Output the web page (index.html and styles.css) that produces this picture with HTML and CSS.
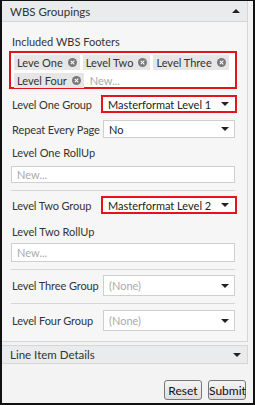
FILE: index.html
```html
<!DOCTYPE html>
<html lang="en">
<head>
    <meta charset="UTF-8">
    <title>WBS Groupings</title>
    <link rel="stylesheet" href="styles.css">
</head>
<body>
    <div class="frame">
        <div class="panel">
            <div class="panel-header">
                <span>WBS Groupings</span>
                <span class="caret up"></span>
            </div>
            <div class="panel-body">
                <div class="field-label">Included WBS Footers</div>
                <div class="tag-box highlight">
                    <span class="tag">Leve One <i class="tag-x"></i></span>
                    <span class="tag">Level Two <i class="tag-x"></i></span>
                    <span class="tag">Level Three <i class="tag-x"></i></span>
                    <span class="tag">Level Four <i class="tag-x"></i></span>
                    <span class="placeholder">New...</span>
                </div>

                <div class="row">
                    <label>Level One Group</label>
                    <div class="select highlight">Masterformat Level 1<span class="caret"></span></div>
                </div>
                <div class="row">
                    <label>Repeat Every Page</label>
                    <div class="select">No<span class="caret"></span></div>
                </div>
                <div class="field-label sub">Level One RollUp</div>
                <div class="input">New...</div>
                <hr>

                <div class="row">
                    <label>Level Two Group</label>
                    <div class="select highlight">Masterformat Level 2<span class="caret"></span></div>
                </div>
                <div class="field-label sub two">Level Two RollUp</div>
                <div class="input tall">New...</div>
                <hr>

                <div class="row">
                    <label>Level Three Group</label>
                    <div class="select muted">(None)<span class="caret"></span></div>
                </div>
                <hr class="tight">
                <div class="row last">
                    <label>Level Four Group</label>
                    <div class="select muted">(None)<span class="caret"></span></div>
                </div>
            </div>
        </div>

        <div class="panel-header collapsed">
            <span>Line Item Details</span>
            <span class="caret"></span>
        </div>

        <div class="actions">
            <button>Reset</button>
            <button>Submit</button>
        </div>
    </div>
</body>
</html>
```

FILE: styles.css
```css
body {
    margin: 0;
    font-family: Lato, "Open Sans", sans-serif;
    font-size: 11px;
    color: #333;
}
.frame {
    width: 255px;
    height: 405px;
    box-sizing: border-box;
    border: 2px solid #111;
    border-top-width: 1px;
    background: #f3f3f3;
    padding-right: 5px;
}
.panel {
    border-right: 1px solid #d6d6d6;
    border-bottom: 1px solid #d6d6d6;
    background: #f6f6f6;
}
.panel-header {
    height: 21px;
    box-sizing: border-box;
    padding: 0 7px 0 8px;
    display: flex;
    align-items: center;
    justify-content: space-between;
    background: #e9ebec;
    border-bottom: 1px solid #d6d6d6;
    color: #333;
    font-size: 11.5px;
}
.panel-header.collapsed {
    margin-top: 3px;
    border: 1px solid #d6d6d6;
    border-left: none;
    height: 19px;
    padding-right: 6px;
}
.panel-body {
    padding: 12px 10px 10px 7px;
}
.field-label {
    padding-left: 3px;
    line-height: 16px;
    margin-bottom: 1px;
}
.field-label.sub {
    margin-top: 7px;
    margin-bottom: 5px;
}
.field-label.sub.two {
    margin-top: 10px;
    margin-bottom: 3px;
}
.highlight {
    border: 2px solid #e3141c !important;
}
.tag-box {
    box-sizing: border-box;
    height: 38px;
    padding: 2px 2px 2px 3px;
    display: flex;
    flex-wrap: wrap;
    gap: 3px 3px;
    align-content: flex-start;
    background: #fff;
    margin-bottom: 6px;
}
.tag {
    display: inline-flex;
    align-items: center;
    height: 15px;
    padding: 0 3px 0 3px;
    background: #e6e6e6;
    gap: 5px;
}
.tag-x {
    width: 9px;
    height: 9px;
    border-radius: 50%;
    background: #7a7a7a;
    position: relative;
}
.tag-x::before,
.tag-x::after {
    content: "";
    position: absolute;
    left: 4px;
    top: 2px;
    width: 1.4px;
    height: 5px;
    background: #fff;
    transform: rotate(45deg);
}
.tag-x::after {
    transform: rotate(-45deg);
}
.placeholder {
    color: #aaa;
    padding-left: 3px;
    line-height: 15px;
}
.row {
    display: flex;
    align-items: center;
    margin-bottom: 7px;
}
.row.last {
    margin-bottom: 0;
}
.row label {
    flex: 0 0 94px;
    box-sizing: border-box;
    padding-left: 3px;
    white-space: nowrap;
    letter-spacing: -0.1px;
}
.select {
    flex: 1;
    height: 18px;
    box-sizing: border-box;
    border: 1px solid #cfcfcf;
    background: #fff;
    display: flex;
    align-items: center;
    justify-content: space-between;
    padding: 0 5px 0 5px;
    margin-right: 2px;
    color: #222;
}
.select.highlight {
    margin-left: -2px;
    margin-right: 0;
    padding-left: 5px;
    padding-right: 6px;
}
.select.muted {
    color: #aaa;
    height: 21px;
}
.caret {
    width: 0;
    height: 0;
    border-left: 4px solid transparent;
    border-right: 4px solid transparent;
    border-top: 4px solid #222;
}
.caret.up {
    border-top: none;
    border-bottom: 4px solid #222;
}
.input {
    height: 17px;
    box-sizing: border-box;
    border: 1px solid #cfcfcf;
    background: #fff;
    margin: 0 2px;
    padding-left: 5px;
    line-height: 15px;
    color: #aaa;
}
.input.tall {
    height: 19px;
    line-height: 17px;
}
hr {
    border: none;
    border-top: 1px solid #d6d6d6;
    margin: 7px 2px 5px 2px;
}
hr.tight {
    margin: 3px 2px 6px 2px;
}
.actions {
    display: flex;
    justify-content: flex-end;
    gap: 6px;
    margin-top: 16px;
    margin-right: 2px;
}
.actions button {
    width: 38px;
    height: 20px;
    padding: 0;
    font-family: inherit;
    font-size: 12px;
    color: #111;
    background: linear-gradient(#f4f4f4, #dedede);
    border: 1px solid #777;
    border-radius: 3px;
}
```
